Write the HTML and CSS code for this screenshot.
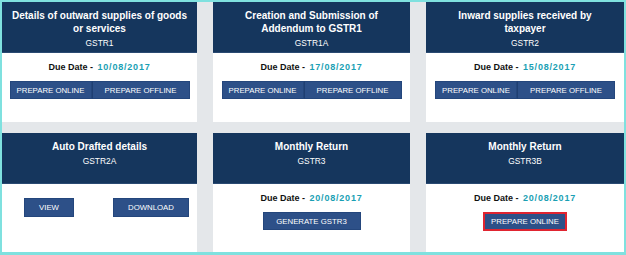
FILE: index.html
```html
<!DOCTYPE html>
<html lang="en">
<head>
    <meta charset="UTF-8">
    <title>Returns Dashboard</title>
    <link rel="stylesheet" href="styles.css">
</head>
<body>
    <div class="frame">
        <div class="tiles">
            <div class="tile">
                <div class="tile-head">
                    <div class="tile-title">Details of outward supplies of goods or services</div>
                    <div class="tile-code">GSTR1</div>
                </div>
                <div class="tile-body">
                    <div class="due">Due Date - <span class="due-date">10/08/2017</span></div>
                    <div class="btn-group">
                        <button class="btn btn-left">PREPARE ONLINE</button>
                        <button class="btn btn-right">PREPARE OFFLINE</button>
                    </div>
                </div>
            </div>

            <div class="tile">
                <div class="tile-head">
                    <div class="tile-title">Creation and Submission of Addendum to GSTR1</div>
                    <div class="tile-code">GSTR1A</div>
                </div>
                <div class="tile-body">
                    <div class="due">Due Date - <span class="due-date">17/08/2017</span></div>
                    <div class="btn-group">
                        <button class="btn btn-left">PREPARE ONLINE</button>
                        <button class="btn btn-right">PREPARE OFFLINE</button>
                    </div>
                </div>
            </div>

            <div class="tile">
                <div class="tile-head">
                    <div class="tile-title">Inward supplies received by<br>taxpayer</div>
                    <div class="tile-code">GSTR2</div>
                </div>
                <div class="tile-body">
                    <div class="due">Due Date - <span class="due-date">15/08/2017</span></div>
                    <div class="btn-group">
                        <button class="btn btn-left">PREPARE ONLINE</button>
                        <button class="btn btn-right">PREPARE OFFLINE</button>
                    </div>
                </div>
            </div>

            <div class="tile">
                <div class="tile-head">
                    <div class="tile-title">Auto Drafted details</div>
                    <div class="tile-code">GSTR2A</div>
                </div>
                <div class="tile-body no-due">
                    <div class="btn-pair">
                        <button class="btn btn-view">VIEW</button>
                        <button class="btn btn-download">DOWNLOAD</button>
                    </div>
                </div>
            </div>

            <div class="tile">
                <div class="tile-head">
                    <div class="tile-title">Monthly Return</div>
                    <div class="tile-code">GSTR3</div>
                </div>
                <div class="tile-body">
                    <div class="due">Due Date - <span class="due-date">20/08/2017</span></div>
                    <div class="btn-center">
                        <button class="btn btn-generate">GENERATE GSTR3</button>
                    </div>
                </div>
            </div>

            <div class="tile">
                <div class="tile-head">
                    <div class="tile-title">Monthly Return</div>
                    <div class="tile-code">GSTR3B</div>
                </div>
                <div class="tile-body">
                    <div class="due">Due Date - <span class="due-date">20/08/2017</span></div>
                    <div class="btn-center">
                        <button class="btn btn-marked">PREPARE ONLINE</button>
                    </div>
                </div>
            </div>
        </div>
    </div>
</body>
</html>
```

FILE: styles.css
```css
* {
    margin: 0;
    padding: 0;
    box-sizing: border-box;
    font-family: "Liberation Sans", Arial, sans-serif;
}
body {
    background: #ffffff;
}
.frame {
    width: 626px;
    height: 255px;
    border: 2px solid #7fe1df;
    border-bottom-width: 3px;
    background: #e4e7ea;
    overflow: hidden;
}
.tiles {
    display: grid;
    grid-template-columns: 195px 197px 1fr;
    grid-template-rows: 120px 120px;
    gap: 11px 16px;
}
.tile {
    background: #ffffff;
}
.tile-head {
    height: 51px;
    padding-top: 7px;
    background: #15365d;
    border-bottom: 1px solid #2a4a72;
    color: #ffffff;
    text-align: center;
}
.tile-title {
    max-width: 180px;
    margin: 0 auto;
    font-size: 10px;
    font-weight: bold;
    line-height: 13px;
}
.tile-code {
    margin-top: 2px;
    font-size: 8.4px;
    line-height: 12px;
}
.tile-body {
    padding-top: 7px;
    text-align: center;
}
.tile-body.no-due {
    padding-top: 14px;
}
.due {
    font-size: 9px;
    font-weight: bold;
    line-height: 14px;
    color: #111111;
    margin-bottom: 7px;
}
.due-date {
    margin-left: 2px;
    color: #1a9fb4;
    letter-spacing: 0.8px;
}
.btn {
    height: 18px;
    background: #2d5088;
    border: 1px solid #24467c;
    color: #ffffff;
    font-size: 7.8px;
    cursor: pointer;
}
.btn-group {
    display: flex;
    justify-content: center;
}
.btn-left {
    width: 82px;
}
.btn-right {
    width: 98px;
    border-left-color: #1f3f72;
}
.btn-pair {
    display: flex;
    justify-content: space-between;
    padding: 0 8px 0 22px;
}
.btn-view {
    width: 50px;
    height: 19px;
}
.btn-download {
    width: 76px;
    height: 19px;
}
.btn-center {
    display: flex;
    justify-content: center;
}
.btn-generate {
    width: 98px;
}
.btn-marked {
    width: 84px;
    height: 19px;
    border: 2px solid #e02430;
}
```
